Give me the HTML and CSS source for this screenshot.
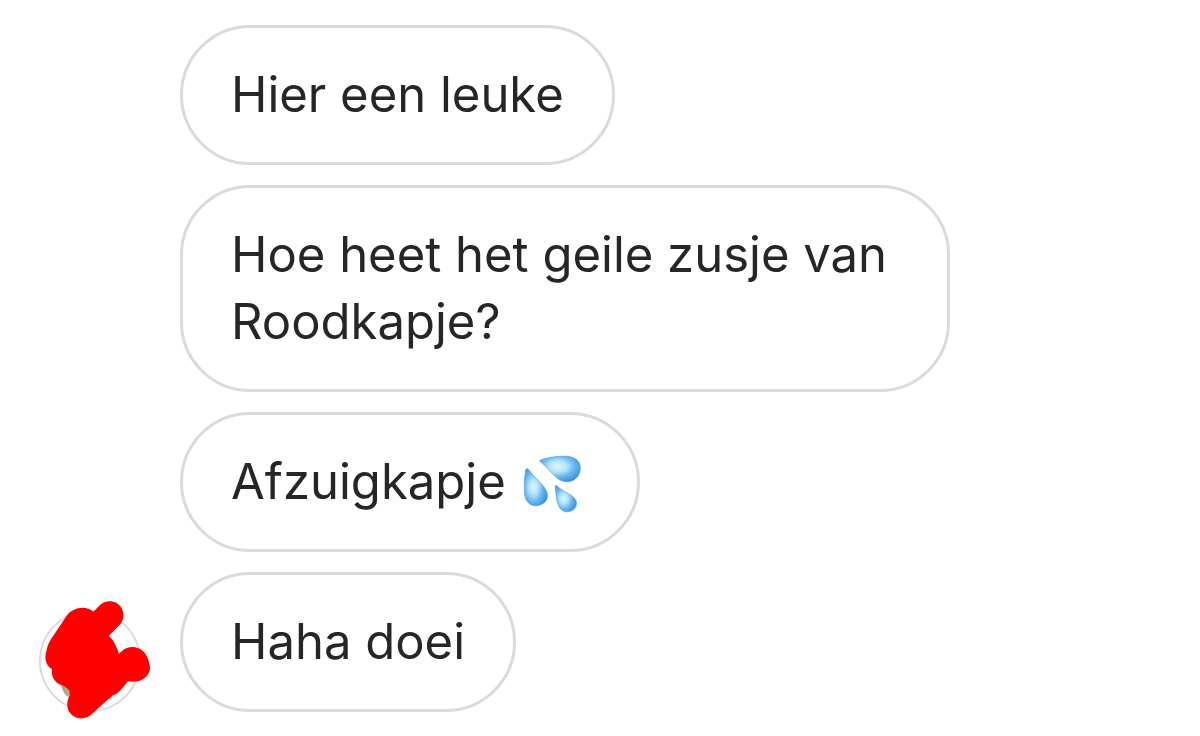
FILE: index.html
```html
<!DOCTYPE html>
<html lang="nl">
<head>
    <meta charset="UTF-8">
    <meta name="viewport" content="width=device-width, initial-scale=1.0">
    <title>Chat</title>
    <link rel="stylesheet" href="styles.css">
</head>
<body>
    <main class="chat">
        <!-- Sender avatar, scribbled over -->
        <svg class="avatar" viewBox="0 0 102 102" aria-hidden="true">
            <circle cx="51" cy="51" r="50" fill="#fff" stroke="#dadada" stroke-width="2"/>
            <g transform="translate(-9 -20) scale(0.3333)">
                <path d="M236 138 Q256 150 260 182 L236 182Z" fill="#b5a482"/>
                <path d="M93 284 Q98 308 114 322 L128 290Z" fill="#b5a482"/>
                <path d="M226 326 L242 328 L250 312Z" fill="#b5a482"/>
                <path d="M190 65 L211 44 C231 27 263 32 275 55 C284 72 281 92 268 106 L237 137 Q257 160 267 191 L277 182 C296 164 330 168 345 190 Q360 212 360 237 C357 260 334 277 307 275 L294 274 L270 303 Q262 312 246 317 L185 373 C171 388 143 390 126 375 C110 361 108 340 118 317 L119 303 Q108 288 91 284 C72 275 63 258 66 237 C49 229 42 207 49 184 Q53 158 70 137 L111 76 C126 55 165 43 190 65Z" fill="#f00"/>
            </g>
        </svg>

        <div class="messages">
            <p class="bubble">Hier een leuke</p>
            <p class="bubble">Hoe heet het geile zusje van Roodkapje?</p>
            <p class="bubble">Afzuigkapje
                <svg class="emoji" viewBox="0 0 66 66" role="img" aria-label="Zweetdruppels">
                    <defs>
                        <radialGradient id="drop-wide" cx="0.45" cy="0.4" r="0.62">
                            <stop offset="0" stop-color="#dcf8fd"/>
                            <stop offset="0.35" stop-color="#b4e4fa"/>
                            <stop offset="0.65" stop-color="#66b8f2"/>
                            <stop offset="1" stop-color="#3f93dd"/>
                        </radialGradient>
                        <radialGradient id="drop-tall" cx="0.4" cy="0.5" r="0.6">
                            <stop offset="0" stop-color="#dcf8fd"/>
                            <stop offset="0.35" stop-color="#b0e2fa"/>
                            <stop offset="0.65" stop-color="#66b8f2"/>
                            <stop offset="1" stop-color="#3f93dd"/>
                        </radialGradient>
                    </defs>
                    <g transform="translate(-4 -5) scale(0.3333)" stroke="#4b9ce0" stroke-width="2">
                        <path d="M76 42 C100 34 130 29 156 31 C182 33 197 47 196 68 C194 94 175 109 150 107 C122 104 108 72 77 48 Q72 44 76 42Z" fill="url(#drop-wide)"/>
                        <path d="M32 72 C28 96 27 120 29 144 C32 167 44 180 64 179 C86 177 99 164 97 146 C95 120 66 106 40 70 Q34 64 32 72Z" fill="url(#drop-tall)"/>
                        <path d="M121 121 C122 140 124 160 130 177 C136 193 147 199 160 197 C177 195 186 183 184 168 C181 147 146 140 126 120 Q121 116 121 121Z" fill="url(#drop-tall)"/>
                    </g>
                </svg>
            </p>
            <p class="bubble">Haha doei</p>
        </div>
    </main>
</body>
</html>
```
FILE: styles.css
```css
* {
    box-sizing: border-box;
}

body {
    margin: 0;
    background-color: #fff;
    color: #262626;
    font-family: Inter, "Liberation Sans", sans-serif;
    font-size: 49px;
    line-height: 67px;
}

.chat {
    display: flex;
    align-items: flex-end;
    gap: 39px;
    padding: 25px 39px 24px;
}

.avatar {
    flex: none;
    width: 102px;
    height: 102px;
    overflow: visible;
}

.messages {
    display: flex;
    flex: 1;
    flex-direction: column;
    align-items: flex-start;
    gap: 20px;
    min-width: 0;
}

.bubble {
    max-width: 770px;
    margin: 0;
    padding: 33px 48px 34px;
    border: 3px solid #dadada;
    border-radius: 70px;
}

.emoji {
    width: 66px;
    height: 66px;
    margin: -10px 4px -6px -1px;
    vertical-align: middle;
}
```
